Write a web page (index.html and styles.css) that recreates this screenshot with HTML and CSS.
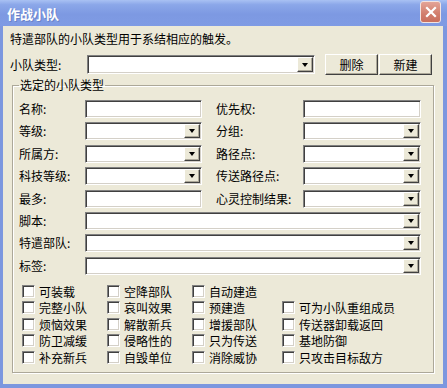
FILE: index.html
```html
<!DOCTYPE html>
<html lang="zh-CN">
<head>
<meta charset="UTF-8">
<title>作战小队</title>
<link rel="stylesheet" href="styles.css">
</head>
<body>
<div class="window">
  <div class="titlebar">
    <span class="title">作战小队</span>
    <span class="close">
      <svg width="12" height="12" viewBox="0 0 12 12"><path d="M2 2 L10 10 M10 2 L2 10" stroke="#fff" stroke-width="2.2" stroke-linecap="square"/></svg>
    </span>
  </div>
  <div class="content">
    <p class="intro">特遣部队的小队类型用于系结相应的触发。</p>
    <div class="type-row">
      <span class="label">小队类型:</span>
      <div class="field combo type-combo"><span class="arrow"></span></div>
      <button class="btn">删除</button>
      <button class="btn">新建</button>
    </div>
    <fieldset class="group">
      <legend>选定的小队类型</legend>
      <div class="fields">
        <span class="label">名称:</span>
        <div class="field"></div>
        <span class="label label2">优先权:</span>
        <div class="field"></div>

        <span class="label">等级:</span>
        <div class="field combo"><span class="arrow"></span></div>
        <span class="label label2">分组:</span>
        <div class="field combo"><span class="arrow"></span></div>

        <span class="label">所属方:</span>
        <div class="field combo"><span class="arrow"></span></div>
        <span class="label label2">路径点:</span>
        <div class="field combo"><span class="arrow"></span></div>

        <span class="label">科技等级:</span>
        <div class="field combo"><span class="arrow"></span></div>
        <span class="label label2">传送路径点:</span>
        <div class="field combo"><span class="arrow"></span></div>

        <span class="label">最多:</span>
        <div class="field"></div>
        <span class="label label2">心灵控制结果:</span>
        <div class="field combo"><span class="arrow"></span></div>

        <span class="label">脚本:</span>
        <div class="field combo full"><span class="arrow"></span></div>

        <span class="label">特遣部队:</span>
        <div class="field combo full"><span class="arrow"></span></div>

        <span class="label">标签:</span>
        <div class="field combo full"><span class="arrow"></span></div>
      </div>
      <div class="checks">
        <label class="check"><span class="box"></span>可装载</label>
        <label class="check"><span class="box"></span>空降部队</label>
        <label class="check"><span class="box"></span>自动建造</label>
        <span></span>

        <label class="check"><span class="box"></span>完整小队</label>
        <label class="check"><span class="box"></span>哀叫效果</label>
        <label class="check"><span class="box"></span>预建造</label>
        <label class="check"><span class="box"></span>可为小队重组成员</label>

        <label class="check"><span class="box"></span>烦恼效果</label>
        <label class="check"><span class="box"></span>解散新兵</label>
        <label class="check"><span class="box"></span>增援部队</label>
        <label class="check"><span class="box"></span>传送器卸载返回</label>

        <label class="check"><span class="box"></span>防卫减缓</label>
        <label class="check"><span class="box"></span>侵略性的</label>
        <label class="check"><span class="box"></span>只为传送</label>
        <label class="check"><span class="box"></span>基地防御</label>

        <label class="check"><span class="box"></span>补充新兵</label>
        <label class="check"><span class="box"></span>自毁单位</label>
        <label class="check"><span class="box"></span>消除威协</label>
        <label class="check"><span class="box"></span>只攻击目标敌方</label>
      </div>
    </fieldset>
  </div>
</div>
</body>
</html>
```

FILE: styles.css
```css
/* ventana estilo XP */
html, body {
  margin: 0;
  padding: 0;
  background: #7c97df;
}
body {
  font-family: "Noto Sans CJK SC", "Noto Sans", sans-serif;
  font-size: 12px;
  color: #000;
}
.window {
  width: 440px;
  height: 384px;
  background: #ece9d8;
  border-left: 3px solid #7c97df;
  border-right: 4px solid #7c97df;
  border-bottom: 4px solid #7c97df;
  display: flex;
  flex-direction: column;
}
.titlebar {
  height: 26px;
  margin: 0 -4px 0 -3px;
  padding: 0 6px 0 7px;
  display: flex;
  align-items: center;
  justify-content: space-between;
  background: linear-gradient(to bottom, #a9c1f3 0%, #8ba7e9 18%, #7d99e2 55%, #7f9be4 100%);
}
.title {
  color: #fff;
  font-size: 13px;
  font-weight: bold;
  text-shadow: 1px 1px 0 #6a84c8;
}
.close {
  width: 19px;
  height: 20px;
  margin-top: -2px;
  border: 1px solid #f2e3e0;
  border-radius: 3px;
  background: linear-gradient(to bottom, #e3a497, #d17d6c 60%, #c96f5e);
  display: flex;
  align-items: center;
  justify-content: center;
}
.content {
  padding: 0 7px;
}
.intro {
  margin: 6px 0 0 0;
  line-height: 14px;
}
.type-row {
  margin-top: 8px;
  height: 21px;
  display: flex;
  align-items: center;
}
.type-row .label {
  width: 77px;
}
.type-row .type-combo {
  width: 228px;
  height: 19px;
  margin-right: 10px;
}
.btn {
  width: 53px;
  height: 21px;
  padding: 0;
  margin-right: 1px;
  font-family: inherit;
  font-size: 12px;
  background: #ece9d8;
  border: 1px solid;
  border-color: #fff #404040 #404040 #fff;
  box-shadow: inset -1px -1px 0 #aca899;
}
.label {
  line-height: 14px;
  white-space: nowrap;
}

/* campos hundidos */
.field {
  position: relative;
  box-sizing: border-box;
  background: #fff;
  border: 1px solid;
  border-color: #808080 #fff #fff #808080;
  box-shadow: inset 1px 1px 0 #404040, inset -1px -1px 0 #d4d0c8;
}
.arrow {
  position: absolute;
  top: 1px;
  right: 1px;
  bottom: 1px;
  width: 16px;
  box-sizing: border-box;
  background: #ece9d8;
  border: 1px solid;
  border-color: #fff #404040 #404040 #fff;
  box-shadow: inset -1px -1px 0 #aca899;
  display: flex;
  align-items: center;
  justify-content: center;
}
.arrow::after {
  content: "";
  width: 0;
  height: 0;
  border-left: 3.5px solid transparent;
  border-right: 3.5px solid transparent;
  border-top: 4px solid #000;
}

/* grupo */
.group {
  margin: 3px 0 0 2px;
  width: 422px;
  box-sizing: border-box;
  padding: 8px 6px 5px 6px;
  border: 1px solid #aca899;
  box-shadow: 1px 1px 0 #fff, inset 1px 1px 0 #fff;
  height: 295px;
}
.group legend {
  margin-left: 0;
  padding: 0 1px;
  line-height: 14px;
}
.fields {
  display: grid;
  grid-template-columns: 66px 117px 101px 118px;
  grid-auto-rows: 18px;
  row-gap: 4.4px;
  align-items: center;
}
.fields .field {
  height: 18px;
}
.fields .label2 {
  padding-left: 14px;
}
.fields .full {
  grid-column: 2 / 5;
}
.checks {
  margin: 10px 0 0 3px;
  display: grid;
  grid-template-columns: 85px 85px 90px auto;
  grid-auto-rows: 13px;
  row-gap: 3.5px;
}
.check {
  display: flex;
  align-items: center;
  white-space: nowrap;
  line-height: 13px;
}
.box {
  width: 13px;
  height: 13px;
  box-sizing: border-box;
  margin-right: 4px;
  background: #fff;
  border: 1px solid;
  border-color: #808080 #fff #fff #808080;
  box-shadow: inset 1px 1px 0 #404040, inset -1px -1px 0 #d4d0c8;
}
```
